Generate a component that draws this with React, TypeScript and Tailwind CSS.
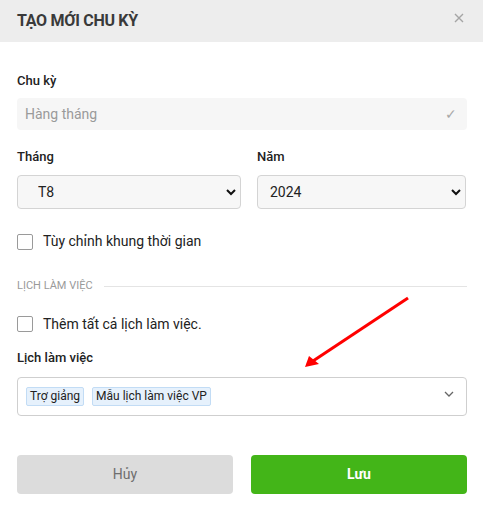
import { useState } from "react";

const font = { fontFamily: "Roboto, 'Noto Sans', sans-serif" };

function App() {
  const [month, setMonth] = useState("T8");
  const [year, setYear] = useState("2024");
  const [custom, setCustom] = useState(false);
  const [all, setAll] = useState(false);

  return (
    <div className="relative w-[483px] h-[511px] bg-white text-[#333]" style={font}>
      {/* Header */}
      <div className="flex items-center justify-between h-[42px] bg-[#ededed] pl-[17px] pr-[18px]">
        <h1 className="text-[16px] font-bold text-[#3a3a3a] tracking-[-0.3px]">TẠO MỚI CHU KỲ</h1>
        <svg width="12" height="12" viewBox="0 0 12 12" className="mt-[-6px]">
          <path d="M2 2 L10 10 M10 2 L2 10" stroke="#a5a5a5" strokeWidth="1.4" />
        </svg>
      </div>

      <div className="px-[17px] pt-[31px] pr-[16px]">
        {/* Chu ky */}
        <label className="block text-[13px] font-medium text-[#222] leading-[16px]">Chu kỳ</label>
        <div className="mt-[9px] flex items-center justify-between h-[32px] rounded bg-[#f6f6f6] pl-[8px] pr-[10px]">
          <span className="text-[14px] text-[#9a9a9a]">Hàng tháng</span>
          <span className="text-[14px] text-[#a8a8a8]">✓</span>
        </div>

        {/* Thang / Nam */}
        <div className="mt-[19px] grid grid-cols-[224px_209px] gap-[16px]">
          <div>
            <label className="block text-[13px] font-medium text-[#222] leading-[16px]">Tháng</label>
            <div className="relative mt-[10px]">
              <select
                value={month}
                onChange={(e) => setMonth(e.target.value)}
                className="w-full h-[34px] appearance-none rounded-sm border border-[#d4d4d4] bg-[#f7f7f7] pl-[20px] text-[14px] text-[#222] outline-none"
              >
                {["T1", "T2", "T3", "T4", "T5", "T6", "T7", "T8", "T9", "T10", "T11", "T12"].map((m) => (
                  <option key={m}>{m}</option>
                ))}
              </select>
              <svg width="10" height="7" viewBox="0 0 10 7" className="absolute right-[5px] top-[14px] pointer-events-none">
                <path d="M1 1 L5 5 L9 1" stroke="#111" strokeWidth="2" fill="none" />
              </svg>
            </div>
          </div>
          <div>
            <label className="block text-[13px] font-medium text-[#222] leading-[16px]">Năm</label>
            <div className="relative mt-[10px]">
              <select
                value={year}
                onChange={(e) => setYear(e.target.value)}
                className="w-full h-[34px] appearance-none rounded-sm border border-[#d4d4d4] bg-[#f7f7f7] pl-[12px] text-[14px] text-[#222] outline-none"
              >
                {["2023", "2024", "2025"].map((y) => (
                  <option key={y}>{y}</option>
                ))}
              </select>
              <svg width="10" height="7" viewBox="0 0 10 7" className="absolute right-[5px] top-[14px] pointer-events-none">
                <path d="M1 1 L5 5 L9 1" stroke="#111" strokeWidth="2" fill="none" />
              </svg>
            </div>
          </div>
        </div>

        {/* Custom */}
        <label className="mt-[22px] flex items-center gap-[10px] cursor-pointer">
          <input
            type="checkbox"
            checked={custom}
            onChange={() => setCustom(!custom)}
            className="w-[16px] h-[16px] appearance-none rounded-[2px] border border-[#9a9a9a] bg-white"
          />
          <span className="text-[14px] text-[#222]">Tùy chỉnh khung thời gian</span>
        </label>

        {/* Section */}
        <div className="mt-[26px] flex items-center gap-[11px]">
          <span className="text-[11px] text-[#9a9a9a] uppercase">Lịch làm việc</span>
          <div className="flex-1 h-px bg-[#e4e4e4]" />
        </div>

        <label className="mt-[19px] flex items-center gap-[10px] cursor-pointer">
          <input
            type="checkbox"
            checked={all}
            onChange={() => setAll(!all)}
            className="w-[16px] h-[16px] appearance-none rounded-[2px] border border-[#9a9a9a] bg-white"
          />
          <span className="text-[14px] text-[#222]">Thêm tất cả lịch làm việc.</span>
        </label>

        <label className="mt-[15px] block text-[13px] font-medium text-[#222] leading-[16px]">Lịch làm việc</label>
        <div className="mt-[11px] flex items-center justify-between h-[39px] rounded-sm border border-[#cfcfcf] pl-[8px] pr-[12px]">
          <div className="flex items-center gap-[8px]">
            <span className="h-[19px] px-[3px] flex items-center rounded-[2px] border border-[#c2dcf5] bg-[#e6f1fc] text-[12px] text-[#222]">Trợ giảng</span>
            <span className="h-[19px] px-[3px] flex items-center rounded-[2px] border border-[#c2dcf5] bg-[#e6f1fc] text-[12px] text-[#222]">Mẫu lịch làm việc VP</span>
          </div>
          <svg width="10" height="6" viewBox="0 0 10 6" className="mt-[-4px]">
            <path d="M1 1 L5 5 L9 1" stroke="#666" strokeWidth="1.3" fill="none" />
          </svg>
        </div>

        {/* Buttons */}
        <div className="mt-[39px] grid grid-cols-[216px_216px] gap-[18px]">
          <button className="h-[39px] rounded bg-[#dcdcdc] text-[14px] text-[#6e6e6e]">Hủy</button>
          <button className="h-[39px] rounded bg-[#43b518] text-[14px] font-bold text-white">Lưu</button>
        </div>
      </div>

      {/* Annotation arrow */}
      <svg className="absolute left-0 top-0 pointer-events-none" width="483" height="511">
        <line x1="408" y1="298" x2="313" y2="361" stroke="#ff0000" strokeWidth="3" />
        <polygon points="305,367 309,356 319,364" fill="#ff0000" />
      </svg>
    </div>
  );
}

export default App;
